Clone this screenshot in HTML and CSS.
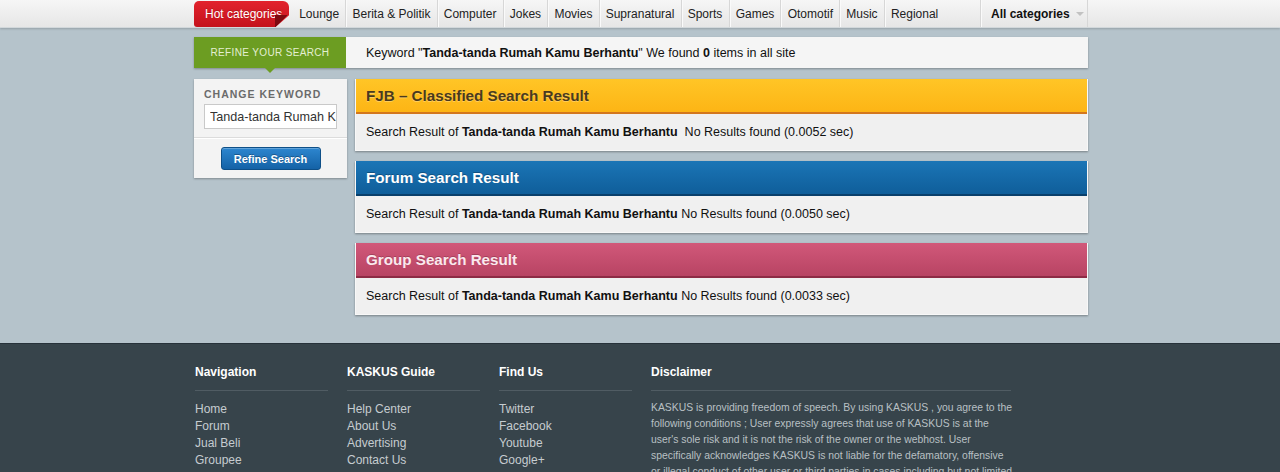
FILE: index.html
```html
<!DOCTYPE html>
<html lang="id">
<head>
<meta charset="utf-8">
<title>Search - KASKUS</title>
<link rel="stylesheet" href="styles.css">
</head>
<body>
<div class="topnav">
  <div class="wrap navrow">
    <a class="hot">Hot categories</a>
    <ul class="cats">
      <li>Lounge</li>
      <li>Berita &amp; Politik</li>
      <li>Computer</li>
      <li>Jokes</li>
      <li>Movies</li>
      <li>Supranatural</li>
      <li>Sports</li>
      <li>Games</li>
      <li>Otomotif</li>
      <li>Music</li>
      <li class="last">Regional</li>
    </ul>
    <div class="allcat">All categories <span class="caret"></span></div>
  </div>
</div>

<div class="wrap main">
  <div class="searchbar">
    <div class="refine-label">REFINE YOUR SEARCH</div>
    <div class="summary"><span>Keyword "<b>Tanda-tanda Rumah Kamu Berhantu</b>" We found <b>0</b> items in all site</span></div>
  </div>

  <div class="content">
    <aside class="sidebar">
      <div class="side-top">
        <div class="side-label">CHANGE KEYWORD</div>
        <input class="kw" type="text" value="Tanda-tanda Rumah Kamu Berhantu">
      </div>
      <div class="side-bottom">
        <button class="btn">Refine Search</button>
      </div>
    </aside>

    <div class="results">
      <section class="panel fjb">
        <h2 class="panel-head">FJB – Classified Search Result</h2>
        <div class="panel-body"><span>Search Result of <b>Tanda-tanda Rumah Kamu Berhantu</b>&nbsp; No Results found (0.0052 sec)</span></div>
      </section>
      <section class="panel forum">
        <h2 class="panel-head">Forum Search Result</h2>
        <div class="panel-body"><span>Search Result of <b>Tanda-tanda Rumah Kamu Berhantu</b> No Results found (0.0050 sec)</span></div>
      </section>
      <section class="panel group">
        <h2 class="panel-head">Group Search Result</h2>
        <div class="panel-body"><span>Search Result of <b>Tanda-tanda Rumah Kamu Berhantu</b> No Results found (0.0033 sec)</span></div>
      </section>
    </div>
  </div>
</div>

<footer class="footer">
  <div class="wrap fcols">
    <div class="fcol">
      <h3>Navigation</h3>
      <ul>
        <li>Home</li>
        <li>Forum</li>
        <li>Jual Beli</li>
        <li>Groupee</li>
      </ul>
    </div>
    <div class="fcol">
      <h3>KASKUS Guide</h3>
      <ul>
        <li>Help Center</li>
        <li>About Us</li>
        <li>Advertising</li>
        <li>Contact Us</li>
      </ul>
    </div>
    <div class="fcol">
      <h3>Find Us</h3>
      <ul>
        <li>Twitter</li>
        <li>Facebook</li>
        <li>Youtube</li>
        <li>Google+</li>
      </ul>
    </div>
    <div class="fcol wide">
      <h3>Disclaimer</h3>
      <p>KASKUS is providing freedom of speech. By using KASKUS , you agree to the following conditions ; User expressly agrees that use of KASKUS is at the user's sole risk and it is not the risk of the owner or the webhost. User specifically acknowledges KASKUS is not liable for the defamatory, offensive or illegal conduct of other user or third parties in cases including but not limited to any interactive communication on or through the site and that the risk from the foregoing, rests entirely with user(s).</p>
    </div>
  </div>
</footer>
</body>
</html>
```

FILE: styles.css
```css
* { box-sizing: border-box; }

html, body {
  margin: 0;
  padding: 0;
}

body {
  background: #b5c3cb;
  font-family: "Liberation Sans", Arial, sans-serif;
  font-size: 12px;
  color: #222;
  overflow: hidden;
}

.wrap {
  width: 896px;
  padding-left: 2px;
  margin: 0 auto;
}

/* ---------- top navigation ---------- */
.topnav {
  height: 28px;
  background: linear-gradient(#f6f6f6, #e6e6e6);
  border-bottom: 1px solid #d2d8db;
  box-shadow: 0 1px 2px rgba(0, 0, 0, 0.18);
}

.navrow {
  display: flex;
  align-items: stretch;
  height: 27px;
}

.hot {
  position: relative;
  display: flex;
  align-items: center;
  margin-top: 1px;
  width: 95px;
  padding-left: 11px;
  color: #fff;
  background: linear-gradient(#e2232d, #c4121c);
  border-radius: 5px 6px 0 3px;
  clip-path: polygon(0 0, 100% 0, 100% 55%, 86% 100%, 0 100%);
  text-shadow: 0 -1px 0 rgba(0, 0, 0, 0.2);
}

.hot::after {
  content: "";
  position: absolute;
  right: 0;
  bottom: 0;
  width: 14px;
  height: 12px;
  background: linear-gradient(-45deg, transparent 50%, #7d0a10 50%);
}

.cats {
  list-style: none;
  margin: 0 0 0 4px;
  padding: 0;
  display: flex;
}

.cats li {
  display: flex;
  align-items: center;
  padding: 0 6.15px;
  color: #222;
  border-right: 1px solid #d7d7d7;
  box-shadow: 1px 0 0 #fafafa;
}

.cats li.last {
  border-right: none;
  box-shadow: none;
}

.allcat {
  margin-left: auto;
  display: flex;
  align-items: center;
  gap: 4px;
  width: 108px;
  padding-left: 10px;
  font-weight: bold;
  color: #111;
  border-left: 1px solid #d7d7d7;
  border-right: 1px solid #d7d7d7;
  box-shadow: inset 1px 0 0 #fafafa;
}

.caret {
  width: 0;
  height: 0;
  margin-left: 2px;
  border-left: 4px solid transparent;
  border-right: 4px solid transparent;
  border-top: 4px solid #c2c2c2;
}

/* ---------- main ---------- */
.main {
  padding-top: 9px;
}

.searchbar {
  display: flex;
  height: 31px;
  background: #f5f5f5;
  box-shadow: 0 1px 2px rgba(0, 0, 0, 0.3);
}

.refine-label {
  position: relative;
  width: 152px;
  display: flex;
  align-items: center;
  justify-content: center;
  background: #6c9d22;
  color: #e4efd2;
  font-size: 10px;
  letter-spacing: 0.35px;
}

.refine-label::after {
  content: "";
  position: absolute;
  left: 71px;
  bottom: -5px;
  border-left: 5px solid transparent;
  border-right: 5px solid transparent;
  border-top: 5px solid #6c9d22;
}

.summary {
  display: flex;
  align-items: center;
  padding-left: 20px;
  font-size: 12.5px;
  color: #111;
}

.content {
  display: flex;
  gap: 8px;
  margin-top: 11px;
  align-items: flex-start;
}

/* ---------- sidebar ---------- */
.sidebar {
  width: 153px;
  background: #f3f3f3;
  box-shadow: 0 1px 2px rgba(0, 0, 0, 0.3);
}

.side-top {
  padding: 9px 10px 8px;
  border-bottom: 1px solid #dcdcdc;
  box-shadow: 0 1px 0 #fff;
}

.side-label {
  font-size: 10.5px;
  font-weight: bold;
  letter-spacing: 1px;
  color: #6b6b6b;
  margin-bottom: 4px;
}

.kw {
  display: block;
  width: 133px;
  height: 25px;
  padding: 0 0 0 5px;
  border: 1px solid #c9c9c9;
  background: #fff;
  font-family: "Liberation Sans", Arial, sans-serif;
  font-size: 12.6px;
  color: #333;
  outline: none;
}

.side-bottom {
  display: flex;
  justify-content: center;
  padding: 9px 0 8px;
}

.btn {
  width: 100px;
  height: 23px;
  border: 1px solid #0e4f87;
  border-radius: 3px;
  background: linear-gradient(#2d86cf, #1462a6);
  color: #fff;
  font-family: "Liberation Sans", Arial, sans-serif;
  font-size: 11px;
  font-weight: bold;
  text-shadow: 0 -1px 0 rgba(0, 0, 0, 0.3);
  box-shadow: inset 0 1px 0 rgba(255, 255, 255, 0.25);
  padding: 0;
}

/* ---------- result panels ---------- */
.results {
  width: 733px;
  display: flex;
  flex-direction: column;
  gap: 10px;
}

.panel {
  background: #f0f0f0;
  box-shadow: 0 1px 2px rgba(0, 0, 0, 0.35);
  border: 1px solid #f8f8f8;
  border-top: none;
}

.panel-head {
  margin: 0;
  height: 35px;
  padding-left: 10px;
  display: flex;
  align-items: center;
  font-size: 15.2px;
  font-weight: bold;
  border-bottom: 2px solid;
}

.panel-body {
  height: 36px;
  padding-left: 10px;
  display: flex;
  align-items: center;
  font-size: 12.5px;
  color: #111;
}

.fjb .panel-head {
  background: linear-gradient(#ffc526, #fdb515);
  border-bottom-color: #d3771d;
  color: #4a3a1e;
  text-shadow: 0 1px 0 rgba(255, 255, 255, 0.3);
}

.forum .panel-head {
  background: linear-gradient(#1b75b6, #0f5e9a);
  border-bottom-color: #093f6b;
  color: #fff;
  text-shadow: 0 -1px 0 rgba(0, 0, 0, 0.25);
}

.group .panel-head {
  background: linear-gradient(#d1587a, #b84463);
  border-bottom-color: #8d2b45;
  color: #fbe9ee;
  text-shadow: 0 -1px 0 rgba(0, 0, 0, 0.2);
}

/* ---------- footer ---------- */
.footer {
  margin-top: 28px;
  background: #37444b;
  border-top: 1px solid #27323a;
  height: 200px;
}

.fcols {
  display: flex;
  gap: 19px;
  padding-top: 21px;
  padding-left: 3px;
}

.fcol {
  width: 133px;
}

.fcol.wide {
  width: 360px;
}

.fcol h3 {
  margin: 0 0 10px;
  padding-bottom: 11px;
  font-size: 12px;
  font-weight: bold;
  color: #fff;
  border-bottom: 1px solid #505c63;
}

.fcol ul {
  list-style: none;
  margin: 0;
  padding: 0;
}

.fcol li {
  font-size: 12px;
  line-height: 17px;
  color: #c6ccd0;
}

.fcol p {
  margin: -1px -3px 0 0;
  font-size: 10.4px;
  line-height: 16px;
  color: #b9c0c4;
}
```
